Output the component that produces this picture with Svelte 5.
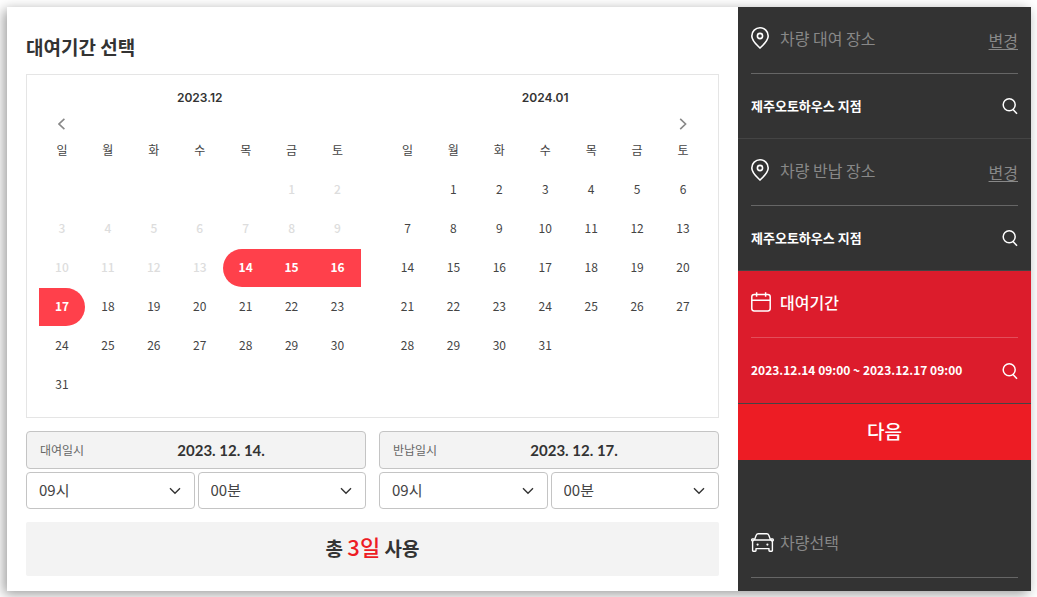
<script lang="ts">
	const weekdays = ['일', '월', '화', '수', '목', '금', '토'];
	const hours = Array.from({ length: 24 }, (_, i) => String(i).padStart(2, '0') + '시');
	const minutes = ['00분', '10분', '20분', '30분', '40분', '50분'];

	const months = [
		{ title: '2023.12', offset: 5, days: 31, disabledUntil: 13, start: 14, end: 17 },
		{ title: '2024.01', offset: 1, days: 31, disabledUntil: 0, start: 0, end: 0 }
	];

	let periods = $state([
		{ id: 'rent', label: '대여일시', date: '2023. 12. 14.', hour: '09시', minute: '00분' },
		{ id: 'return', label: '반납일시', date: '2023. 12. 17.', hour: '09시', minute: '00분' }
	]);

	const places = [
		{ title: '차량 대여 장소', value: '제주오토하우스 지점' },
		{ title: '차량 반납 장소', value: '제주오토하우스 지점' }
	];

	// Split a month into weeks, 0 is an empty cell
	function getWeeks(offset: number, days: number): number[][] {
		const weeks: number[][] = [];
		for (let first = 1 - offset; first <= days; first += 7) {
			weeks.push(weekdays.map((_, i) => (first + i > 0 && first + i <= days ? first + i : 0)));
		}
		return weeks;
	}
</script>

{#snippet searchButton()}
	<button class="search" type="button" aria-label="검색">
		<svg width="16" height="18" viewBox="0 0 16 18" fill="none" stroke="currentColor" stroke-width="1.5">
			<circle cx="7.2" cy="7.8" r="6" />
			<path d="M11 12.4l4 4.4" />
		</svg>
	</button>
{/snippet}

{#snippet chevron()}
	<svg width="12" height="8" viewBox="0 0 12 8" fill="none" stroke="#333" stroke-width="1.4">
		<path d="M1 1.2l5 5 5-5" />
	</svg>
{/snippet}

<div class="page">
	<div class="dialog">
		<main>
			<h2>대여기간 선택</h2>

			<div class="calendar">
				{#each months as month, index}
					<section class="month">
						<h3>{month.title}</h3>
						<div class="nav" class:next={index === 1}>
							<button type="button" aria-label={index === 0 ? '이전 달' : '다음 달'}>
								<svg width="8" height="12" viewBox="0 0 8 12" fill="none" stroke="currentColor" stroke-width="1.6">
									<path d={index === 0 ? 'M6.4 .8L1 6l5.4 5.2' : 'M1.2 .8L6.6 6l-5.4 5.2'} />
								</svg>
							</button>
						</div>
						<table>
							<thead>
								<tr>
									{#each weekdays as weekday}
										<th>{weekday}</th>
									{/each}
								</tr>
							</thead>
							<tbody>
								{#each getWeeks(month.offset, month.days) as week}
									<tr>
										{#each week as day}
											<td>
												{#if day}
													<button
														type="button"
														class="day"
														class:selected={day >= month.start && day <= month.end}
														class:start={day === month.start}
														class:end={day === month.end}
														disabled={day <= month.disabledUntil}>{day}</button
													>
												{/if}
											</td>
										{/each}
									</tr>
								{/each}
							</tbody>
						</table>
					</section>
				{/each}
			</div>

			<div class="periods">
				{#each periods as period}
					<div class="period">
						<div class="date">
							<label for={period.id}>{period.label}</label>
							<input id={period.id} type="text" readonly value={period.date} />
						</div>
						<div class="times">
							<div class="select">
								<select bind:value={period.hour} aria-label="{period.label} 시">
									{#each hours as hour}
										<option>{hour}</option>
									{/each}
								</select>
								{@render chevron()}
							</div>
							<div class="select">
								<select bind:value={period.minute} aria-label="{period.label} 분">
									{#each minutes as minute}
										<option>{minute}</option>
									{/each}
								</select>
								{@render chevron()}
							</div>
						</div>
					</div>
				{/each}
			</div>

			<p class="total">총 <strong>3일</strong> 사용</p>
		</main>

		<aside>
			{#each places as place}
				<section class="step">
					<div class="title">
						<svg width="18" height="22" viewBox="0 0 18 22" fill="none" stroke="#fff" stroke-width="1.6">
							<path d="M9 21C6.2 18.2.8 13.9.8 8.9a8.2 8.1 0 0 1 16.4 0C17.2 13.9 11.8 18.2 9 21z" />
							<circle cx="9" cy="9" r="2.6" />
						</svg>
						<h4>{place.title}</h4>
						<a href="#change">변경</a>
					</div>
					<div class="value">
						<span>{place.value}</span>
						{@render searchButton()}
					</div>
				</section>
			{/each}

			<section class="step active">
				<div class="title">
					<svg width="20" height="20" viewBox="0 0 20 20" fill="none" stroke="#fff" stroke-width="1.5">
						<rect x=".8" y="2.4" width="18.4" height="16.6" rx="2.4" />
						<path d="M.8 8.2h18.4M5.6 .2v4.6M14.6 .2v4.6" />
					</svg>
					<h4>대여기간</h4>
				</div>
				<div class="value">
					<span class="range">2023.12.14 09:00 ~ 2023.12.17 09:00</span>
					{@render searchButton()}
				</div>
			</section>

			<button class="submit" type="button">다음</button>

			<section class="step car">
				<div class="title">
					<svg width="23" height="19" viewBox="0 0 23 19" fill="none" stroke="#fff" stroke-width="1.4" stroke-linejoin="round">
						<path d="M3.4 7L5.2 2.2C5.6 1.200 6.200.8 7.200.8h8.600c1 0 1.600.4 2 1.400L19.600 7" />
						<path d="M3.600 7h15.800c1.300 0 2 .9 2 2.200v8.300c0 .5-.2.7-.7.7h-2c-.5 0-.7-.2-.7-.7v-1.900H5v1.900c0 .5-.2.7-.7.7h-2c-.5 0-.7-.2-.7-.7V9.200C1.600 7.900 2.300 7 3.600 7z" />
						<path d="M3.400 6H1.300C.5 6 .5 7.900 1.300 7.900h.9M19.600 6h2.100c.8 0 .8 1.900 0 1.900h-.9" />
						<circle cx="6.600" cy="11.600" r="1.100" fill="#fff" stroke="none" />
						<circle cx="16.400" cy="11.600" r="1.100" fill="#fff" stroke="none" />
					</svg>
					<h4>차량선택</h4>
				</div>
			</section>
		</aside>
	</div>
</div>

<style>
	:global(body) {
		margin: 0;
		background: #fff;
	}

	.page {
		box-sizing: border-box;
		min-height: 100vh;
		padding: 7px 6px 6px 7px;
		overflow: hidden;
		font-family: 'Noto Sans CJK KR', sans-serif;
		color: #333;
	}

	.dialog {
		display: grid;
		grid-template-columns: 1fr 293px;
		background: #fff;
		box-shadow: -3px 3px 12px rgba(0, 0, 0, 0.4);
	}

	h2,
	h3,
	h4,
	p {
		margin: 0;
	}

	button,
	input,
	select {
		font-family: inherit;
		color: inherit;
	}

	button {
		padding: 0;
		border: 0;
		background: none;
		cursor: pointer;
	}

	svg {
		display: block;
		flex: none;
	}

	main {
		padding: 26px 19px 15px;
	}

	h2 {
		margin-bottom: 13px;
		font-size: 19px;
		line-height: 28px;
		font-weight: 700;
	}

	.calendar {
		display: grid;
		grid-template-columns: 1fr 1fr;
		gap: 24px;
		padding: 12px 12px 13px;
		border: 1px solid #e5e5e5;
	}

	h3 {
		font-family: Inter, sans-serif;
		font-size: 12px;
		line-height: 22px;
		font-weight: 600;
		text-align: center;
	}

	.nav {
		display: flex;
		height: 30px;
	}

	.nav.next {
		justify-content: flex-end;
	}

	.nav button {
		display: flex;
		align-items: center;
		justify-content: center;
		width: calc(100% / 7);
		color: #888;
	}

	table {
		width: 100%;
		table-layout: fixed;
		border-collapse: collapse;
	}

	th {
		padding: 0 0 9px;
		font-size: 12px;
		line-height: 22px;
		font-weight: 400;
		color: #444;
	}

	td {
		height: 39px;
		padding: 0;
	}

	.day {
		display: block;
		width: 100%;
		height: 38px;
		margin-top: 1px;
		padding-bottom: 3px;
		font-size: 12px;
		color: #444;
	}

	.day:disabled {
		font-weight: 500;
		color: #ddd;
	}

	.day.selected {
		background: #ff404b;
		font-weight: 700;
		color: #fff;
	}

	.day.start {
		border-radius: 19px 0 0 19px;
	}

	.day.end {
		border-radius: 0 19px 19px 0;
	}

	.periods {
		display: grid;
		grid-template-columns: 1fr 1fr;
		gap: 13px;
		margin: 13px 0;
	}

	.date {
		display: flex;
		align-items: center;
		gap: 6px;
		box-sizing: border-box;
		height: 38px;
		margin-bottom: 3px;
		padding: 0 13px;
		border: 1px solid #c4c4c4;
		border-radius: 4px;
		background: #f3f3f3;
	}

	label {
		flex: none;
		padding-bottom: 2px;
		font-size: 12px;
		color: #666;
	}

	.date input {
		flex: 1;
		min-width: 0;
		padding: 0;
		border: 0;
		background: none;
		font-family: Lato, sans-serif;
		font-size: 15px;
		font-weight: 700;
		text-align: center;
	}

	.times {
		display: grid;
		grid-template-columns: 1fr 1fr;
		gap: 3px;
	}

	.select {
		display: grid;
		align-items: center;
	}

	.select > * {
		grid-area: 1 / 1;
	}

	.select svg {
		justify-self: end;
		margin-right: 14px;
		pointer-events: none;
	}

	select {
		width: 100%;
		height: 37px;
		padding: 0 12px 2px;
		appearance: none;
		border: 1px solid #c4c4c4;
		border-radius: 4px;
		background: #fff;
		font-size: 15px;
		color: #444;
	}

	.total {
		padding-bottom: 2px;
		border-radius: 2px;
		background: #f3f3f3;
		font-size: 19px;
		line-height: 52px;
		font-weight: 700;
		text-align: center;
	}

	.total strong {
		font-size: 22px;
		line-height: 24px;
		font-weight: 500;
		color: #ed1c24;
	}

	aside {
		background: #333;
		color: #fff;
	}

	.step {
		padding: 0 13px;
		border-bottom: 1px solid #444;
	}

	.title {
		display: flex;
		align-items: center;
		height: 62px;
		padding-bottom: 4px;
		border-bottom: 1px solid #666;
	}

	h4 {
		flex: 1;
		margin-left: 11px;
		font-size: 16px;
		line-height: 24px;
		font-weight: 400;
		color: #888;
	}

	.title a {
		padding-top: 4px;
		font-size: 16px;
		color: #888;
		text-underline-offset: 2px;
	}

	.value {
		display: flex;
		align-items: center;
		justify-content: space-between;
		height: 64px;
		font-size: 13px;
		font-weight: 700;
	}

	.value span {
		padding-bottom: 2px;
	}

	.value .range {
		font-size: 12px;
	}

	.search {
		color: #fff;
	}

	.active {
		background: #dc1c2c;
	}

	.active .title {
		border-color: #e34e5b;
	}

	.active .value {
		height: 65px;
	}

	.active h4 {
		margin-left: 9px;
		font-weight: 500;
		color: #fff;
	}

	.submit {
		width: 100%;
		height: 56px;
		padding-bottom: 3px;
		background: #ed1c24;
		font-size: 19px;
		font-weight: 500;
		color: #fff;
	}

	.car {
		padding-top: 51px;
		border: 0;
	}

	.car h4 {
		margin-left: 6px;
	}
</style>
